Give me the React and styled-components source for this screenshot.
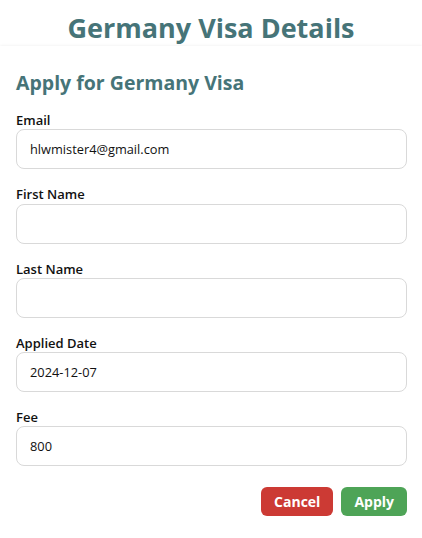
import React from "react";
import styled, { createGlobalStyle } from "styled-components";

const Global = createGlobalStyle`
  html, body { margin: 0; padding: 0; background: #ffffff; }
  body { font-family: "Open Sans", "Noto Sans", sans-serif; color: #111; }
  * { box-sizing: border-box; }
`;

const Page = styled.div`
  width: 422px;
  display: flex;
  flex-direction: column;
`;

const Header = styled.header`
  height: 46px;
  display: flex;
  align-items: center;
  justify-content: center;
`;

const Title = styled.h1`
  margin: 0;
  font-size: 27px;
  font-weight: 700;
  color: #467478;
  line-height: 1;
  padding-top: 8px;
`;

const Card = styled.section`
  background: #fff;
  box-shadow: 0 0 3px rgba(0, 0, 0, 0.08);
  padding: 16px 15px 20px 16px;
  display: flex;
  flex-direction: column;
`;

const SubTitle = styled.h2`
  margin: 8px 0 15px;
  font-size: 19.5px;
  font-weight: 700;
  color: #467478;
  line-height: 26px;
`;

const Form = styled.form`
  display: flex;
  flex-direction: column;
  gap: 16px;
`;

const Field = styled.div`
  display: flex;
  flex-direction: column;
`;

const Label = styled.label`
  font-size: 13px;
  font-weight: 600;
  line-height: 18.3px;
  color: #111;
`;

const Input = styled.input`
  height: 40px;
  width: 100%;
  border: 1px solid #d9d9d9;
  border-radius: 8px;
  padding: 0 13px;
  font-family: "Open Sans", "Noto Sans", sans-serif;
  font-size: 12.8px;
  color: #111;
  background: #fff;
  outline: none;
`;

const Actions = styled.div`
  display: flex;
  justify-content: flex-end;
  gap: 8px;
  margin-top: 5px;
`;

const Button = styled.button`
  height: 29px;
  padding: 0 13px;
  border: none;
  border-radius: 6px;
  font-family: "Open Sans", "Noto Sans", sans-serif;
  font-size: 14px;
  font-weight: 700;
  color: #fff;
  background: ${(p) => (p.$variant === "danger" ? "#cc3a34" : "#4ea457")};
  cursor: pointer;
`;

export default function App() {
  return (
    <Page>
      <Global />
      <Header>
        <Title>Germany Visa Details</Title>
      </Header>
      <Card>
        <SubTitle>Apply for Germany Visa</SubTitle>
        <Form onSubmit={(e) => e.preventDefault()}>
          <Field>
            <Label>Email</Label>
            <Input defaultValue="hlwmister4@gmail.com" />
          </Field>
          <Field>
            <Label>First Name</Label>
            <Input />
          </Field>
          <Field>
            <Label>Last Name</Label>
            <Input />
          </Field>
          <Field>
            <Label>Applied Date</Label>
            <Input defaultValue="2024-12-07" />
          </Field>
          <Field>
            <Label>Fee</Label>
            <Input defaultValue="800" />
          </Field>
          <Actions>
            <Button type="button" $variant="danger">Cancel</Button>
            <Button type="submit">Apply</Button>
          </Actions>
        </Form>
      </Card>
    </Page>
  );
}
